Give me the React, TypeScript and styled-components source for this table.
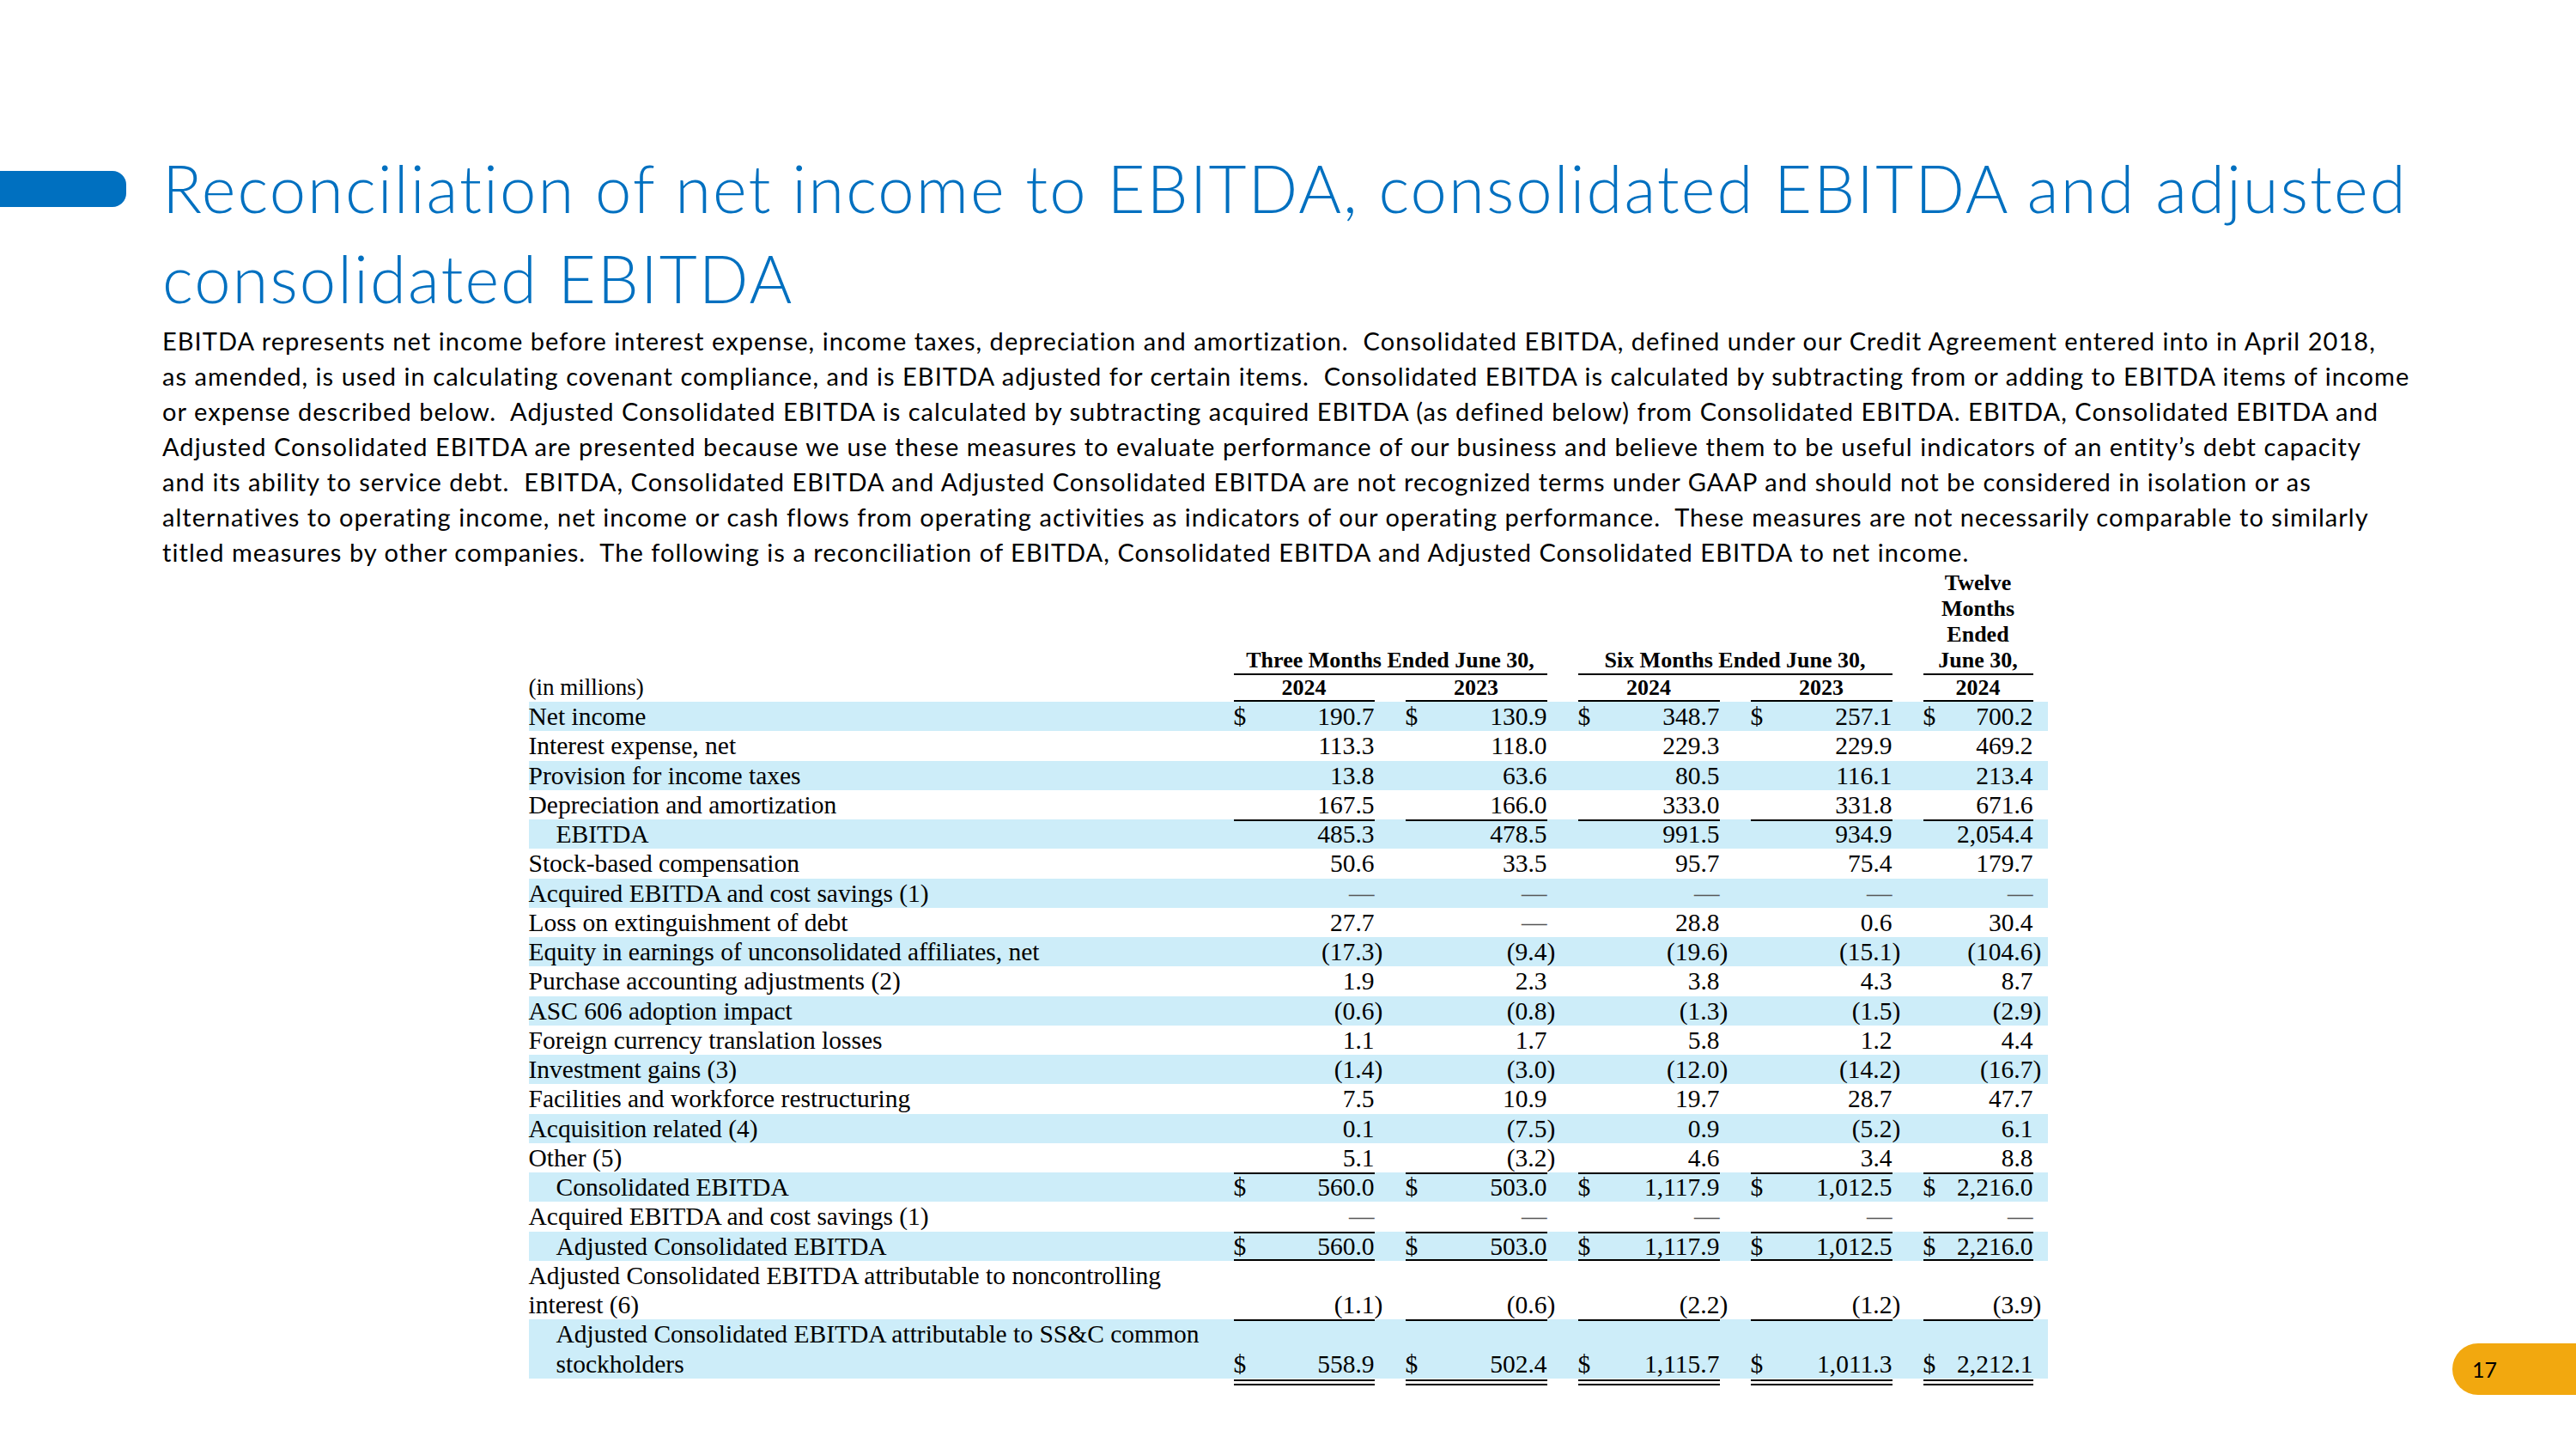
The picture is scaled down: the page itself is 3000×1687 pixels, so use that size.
import React from 'react';
import styled, { createGlobalStyle } from 'styled-components';

const GlobalStyle = createGlobalStyle`
  html, body {
    margin: 0;
    padding: 0;
    background: #ffffff;
  }
  body {
    font-family: Lato, "Liberation Sans", sans-serif;
    font-variant-ligatures: no-common-ligatures;
  }
`;

const Slide = styled.div`
  position: relative;
  width: 3000px;
  height: 1687px;
  overflow: hidden;
  background: #ffffff;
  display: flex;
  flex-direction: column;
  padding-top: 166px;
  box-sizing: border-box;
`;

const Header = styled.header`
  display: flex;
  align-items: flex-start;
  gap: 42px;
`;

const AccentBar = styled.div`
  flex: none;
  width: 147px;
  height: 42px;
  margin-top: 33px;
  background: #0070c0;
  border-radius: 0 16px 16px 0;
`;

const Intro = styled.div`
  display: flex;
  flex-direction: column;
`;

const Title = styled.h1`
  margin: 0;
  font-family: Lato, "Liberation Sans", sans-serif;
  font-weight: 300;
  font-size: 76px;
  letter-spacing: 2.05px;
  line-height: 105px;
  color: #0070c0;
  white-space: nowrap;
  font-variant-ligatures: none;
`;

const TitleLine = styled.span`
  display: block;
`;

const Paragraph = styled.p`
  margin: 0;
  font-family: Lato, "Liberation Sans", sans-serif;
  font-weight: 400;
  font-size: 29px;
  letter-spacing: 1.05px;
  line-height: 41px;
  color: #000000;
  font-variant-ligatures: none;
`;

const ParaLine = styled.span`
  display: block;
  white-space: pre;
`;

const COLS = '785px 200px 201px 201px 201px 164px 17px';

const Table = styled.div`
  align-self: center;
  width: 1769px;
  margin-top: 1px;
  font-family: "Liberation Serif", "Times New Roman", serif;
  font-size: 29.5px;
  color: #000000;
`;

const GroupRow = styled.div`
  display: grid;
  grid-template-columns: ${COLS};
  line-height: 30px;
  font-size: 26px;
  font-weight: bold;
`;

const GroupCell = styled.div<{ $start: number; $span: number }>`
  grid-column: ${(p) => p.$start} / span ${(p) => p.$span};
  padding-left: 36px;
  display: flex;
  align-items: flex-end;
`;

const GroupLabel = styled.div`
  flex: 1;
  text-align: center;
  white-space: nowrap;
  padding-bottom: 2px;
  box-shadow: inset 0 -2px 0 #000000;
`;

const YearRow = styled.div`
  display: grid;
  grid-template-columns: ${COLS};
  line-height: 29px;
`;

const UnitsLabel = styled.div`
  padding-bottom: 2px;
  font-size: 27px;
`;

const YearCell = styled.div`
  padding-left: 36px;
  display: flex;
`;

const YearLabel = styled.div`
  flex: 1;
  text-align: center;
  font-size: 26px;
  font-weight: bold;
  padding-bottom: 2px;
  box-shadow: inset 0 -2px 0 #000000;
`;

const Row = styled.div<{ $band?: boolean }>`
  display: grid;
  grid-template-columns: ${COLS};
  line-height: 34.25px;
  background: ${(p) => (p.$band ? '#cdedf9' : 'transparent')};
`;

const Label = styled.div<{ $indent?: boolean }>`
  padding-left: ${(p) => (p.$indent ? 32 : 0)}px;
  white-space: nowrap;
`;

const ValueCell = styled.div`
  padding-left: 36px;
  display: flex;
`;

type Rule = 'none' | 'top' | 'both';

const ValueBox = styled.div<{ $rule: Rule }>`
  flex: 1;
  display: flex;
  justify-content: space-between;
  align-items: flex-end;
  box-shadow: ${(p) =>
    p.$rule === 'top'
      ? 'inset 0 2px 0 #000000'
      : p.$rule === 'both'
      ? 'inset 0 2px 0 #000000, inset 0 -2px 0 #000000'
      : 'none'};
`;

const Dollar = styled.span``;

const Amount = styled.span<{ $dash?: boolean }>`
  margin-left: auto;
  white-space: nowrap;
  color: ${(p) => (p.$dash ? '#555555' : 'inherit')};
`;

const Hang = styled.span`
  margin-right: -0.333em;
`;

const DoubleRuleRow = styled.div`
  display: grid;
  grid-template-columns: ${COLS};
  margin-top: 1px;
`;

const DoubleRuleCell = styled.div`
  padding-left: 36px;
  display: flex;
`;

const DoubleRule = styled.div`
  flex: 1;
  height: 7px;
  box-sizing: border-box;
  border-top: 2px solid #000000;
  border-bottom: 2px solid #000000;
`;

const PageBadge = styled.div`
  position: absolute;
  right: 0;
  top: 1564px;
  width: 144px;
  height: 60px;
  box-sizing: border-box;
  padding-left: 23px;
  border-radius: 30px 0 0 30px;
  background: #f2a80f;
  display: flex;
  align-items: center;
  font-family: Lato, "Liberation Sans", sans-serif;
  font-size: 25px;
  color: #000000;
`;

type DataRow = {
  label: React.ReactNode;
  indent?: boolean;
  band?: boolean;
  dollar?: boolean;
  rule?: Rule;
  values: string[];
};

const DASH = '\u2014';
const DASHES = [DASH, DASH, DASH, DASH, DASH];

const rows: DataRow[] = [
  { label: 'Net income', band: true, dollar: true, values: ['190.7', '130.9', '348.7', '257.1', '700.2'] },
  { label: 'Interest expense, net', values: ['113.3', '118.0', '229.3', '229.9', '469.2'] },
  { label: 'Provision for income taxes', band: true, values: ['13.8', '63.6', '80.5', '116.1', '213.4'] },
  { label: 'Depreciation and amortization', values: ['167.5', '166.0', '333.0', '331.8', '671.6'] },
  { label: 'EBITDA', indent: true, band: true, rule: 'top', values: ['485.3', '478.5', '991.5', '934.9', '2,054.4'] },
  { label: 'Stock-based compensation', values: ['50.6', '33.5', '95.7', '75.4', '179.7'] },
  { label: 'Acquired EBITDA and cost savings (1)', band: true, values: DASHES },
  { label: 'Loss on extinguishment of debt', values: ['27.7', DASH, '28.8', '0.6', '30.4'] },
  { label: 'Equity in earnings of unconsolidated affiliates, net', band: true, values: ['(17.3)', '(9.4)', '(19.6)', '(15.1)', '(104.6)'] },
  { label: 'Purchase accounting adjustments (2)', values: ['1.9', '2.3', '3.8', '4.3', '8.7'] },
  { label: 'ASC 606 adoption impact', band: true, values: ['(0.6)', '(0.8)', '(1.3)', '(1.5)', '(2.9)'] },
  { label: 'Foreign currency translation losses', values: ['1.1', '1.7', '5.8', '1.2', '4.4'] },
  { label: 'Investment gains (3)', band: true, values: ['(1.4)', '(3.0)', '(12.0)', '(14.2)', '(16.7)'] },
  { label: 'Facilities and workforce restructuring', values: ['7.5', '10.9', '19.7', '28.7', '47.7'] },
  { label: 'Acquisition related (4)', band: true, values: ['0.1', '(7.5)', '0.9', '(5.2)', '6.1'] },
  { label: 'Other (5)', values: ['5.1', '(3.2)', '4.6', '3.4', '8.8'] },
  { label: 'Consolidated EBITDA', indent: true, band: true, dollar: true, rule: 'top', values: ['560.0', '503.0', '1,117.9', '1,012.5', '2,216.0'] },
  { label: 'Acquired EBITDA and cost savings (1)', values: DASHES },
  { label: 'Adjusted Consolidated EBITDA', indent: true, band: true, dollar: true, rule: 'both', values: ['560.0', '503.0', '1,117.9', '1,012.5', '2,216.0'] },
  {
    label: (
      <>
        Adjusted Consolidated EBITDA attributable to noncontrolling
        <br />
        interest (6)
      </>
    ),
    values: ['(1.1)', '(0.6)', '(2.2)', '(1.2)', '(3.9)'],
  },
  {
    label: (
      <>
        Adjusted Consolidated EBITDA attributable to SS&amp;C common
        <br />
        stockholders
      </>
    ),
    indent: true,
    band: true,
    dollar: true,
    rule: 'top',
    values: ['558.9', '502.4', '1,115.7', '1,011.3', '2,212.1'],
  },
];

const paragraphLines = [
  'EBITDA represents net income before interest expense, income taxes, depreciation and amortization.  Consolidated EBITDA, defined under our Credit Agreement entered into in April 2018,',
  'as amended, is used in calculating covenant compliance, and is EBITDA adjusted for certain items.  Consolidated EBITDA is calculated by subtracting from or adding to EBITDA items of income',
  'or expense described below.  Adjusted Consolidated EBITDA is calculated by subtracting acquired EBITDA (as defined below) from Consolidated EBITDA. EBITDA, Consolidated EBITDA and',
  'Adjusted Consolidated EBITDA are presented because we use these measures to evaluate performance of our business and believe them to be useful indicators of an entity\u2019s debt capacity',
  'and its ability to service debt.  EBITDA, Consolidated EBITDA and Adjusted Consolidated EBITDA are not recognized terms under GAAP and should not be considered in isolation or as',
  'alternatives to operating income, net income or cash flows from operating activities as indicators of our operating performance.  These measures are not necessarily comparable to similarly',
  'titled measures by other companies.  The following is a reconciliation of EBITDA, Consolidated EBITDA and Adjusted Consolidated EBITDA to net income.',
];

function Figure({ value }: { value: string }) {
  if (value === DASH) {
    return <Amount $dash>{value}</Amount>;
  }
  if (value.startsWith('(') && value.endsWith(')')) {
    return (
      <Amount>
        {value.slice(0, -1)}
        <Hang>)</Hang>
      </Amount>
    );
  }
  return <Amount>{value}</Amount>;
}

export default function App() {
  return (
    <>
      <GlobalStyle />
      <Slide>
        <Header>
          <AccentBar />
          <Intro>
            <Title>
              <TitleLine>Reconciliation of net income to EBITDA, consolidated EBITDA and adjusted</TitleLine>
              <TitleLine>consolidated EBITDA</TitleLine>
            </Title>
            <Paragraph>
              {paragraphLines.map((line, i) => (
                <ParaLine key={i}>{line}</ParaLine>
              ))}
            </Paragraph>
          </Intro>
        </Header>

        <Table>
          <GroupRow>
            <GroupCell $start={2} $span={2}>
              <GroupLabel>Three Months Ended June 30,</GroupLabel>
            </GroupCell>
            <GroupCell $start={4} $span={2}>
              <GroupLabel>Six Months Ended June 30,</GroupLabel>
            </GroupCell>
            <GroupCell $start={6} $span={1}>
              <GroupLabel>
                Twelve
                <br />
                Months
                <br />
                Ended
                <br />
                June 30,
              </GroupLabel>
            </GroupCell>
          </GroupRow>
          <YearRow>
            <UnitsLabel>(in millions)</UnitsLabel>
            {['2024', '2023', '2024', '2023', '2024'].map((y, i) => (
              <YearCell key={i}>
                <YearLabel>{y}</YearLabel>
              </YearCell>
            ))}
          </YearRow>
          {rows.map((row, r) => (
            <Row key={r} $band={row.band}>
              <Label $indent={row.indent}>{row.label}</Label>
              {row.values.map((v, c) => (
                <ValueCell key={c}>
                  <ValueBox $rule={row.rule ?? 'none'}>
                    {row.dollar && <Dollar>$</Dollar>}
                    <Figure value={v} />
                  </ValueBox>
                </ValueCell>
              ))}
            </Row>
          ))}
          <DoubleRuleRow>
            <div />
            {[0, 1, 2, 3, 4].map((i) => (
              <DoubleRuleCell key={i}>
                <DoubleRule />
              </DoubleRuleCell>
            ))}
          </DoubleRuleRow>
        </Table>

        <PageBadge>17</PageBadge>
      </Slide>
    </>
  );
}
